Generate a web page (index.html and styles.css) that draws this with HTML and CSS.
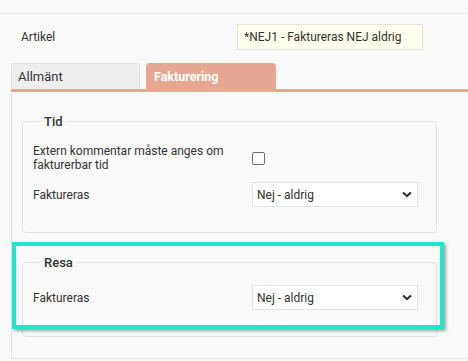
FILE: index.html
```html
<!DOCTYPE html>
<html lang="sv">
<head>
  <meta charset="UTF-8" />
  <title>Artikel</title>
  <link rel="stylesheet" href="styles.css">
</head>
<body>
  <div class="topbar"></div>

  <div class="field-row article-row">
    <label class="field-label">Artikel</label>
    <input type="text" class="article-input" value="*NEJ1 - Faktureras NEJ aldrig" readonly />
  </div>

  <div class="tabs">
    <div class="tab">Allmänt</div>
    <div class="tab active">Fakturering</div>
  </div>

  <div class="panel">
    <fieldset class="group">
      <legend>Tid</legend>
      <div class="field-row check-row">
        <label class="field-label" for="extern">Extern kommentar måste anges om fakturerbar tid</label>
        <input type="checkbox" id="extern" class="check" />
      </div>
      <div class="field-row">
        <label class="field-label">Faktureras</label>
        <div class="select-wrap">
          <select class="select">
            <option>Nej - aldrig</option>
          </select>
          <svg class="chevron" width="10" height="7" viewBox="0 0 10 7"><path d="M1 1.5 L5 5 L9 1.5" fill="none" stroke="#333" stroke-width="2.2"/></svg>
        </div>
      </div>
    </fieldset>

    <fieldset class="group">
      <legend>Resa</legend>
      <div class="field-row">
        <label class="field-label">Faktureras</label>
        <div class="select-wrap">
          <select class="select">
            <option>Nej - aldrig</option>
          </select>
          <svg class="chevron" width="10" height="7" viewBox="0 0 10 7"><path d="M1 1.5 L5 5 L9 1.5" fill="none" stroke="#333" stroke-width="2.2"/></svg>
        </div>
      </div>
    </fieldset>

    <div class="highlight"></div>
  </div>
</body>
</html>
```

FILE: styles.css
```css
* {
  box-sizing: border-box;
}

body {
  margin: 0;
  font-family: Roboto, 'Liberation Sans', sans-serif;
  font-size: 12px;
  color: #333;
  background: #f9f9f9;
  overflow: hidden;
}

.topbar {
  height: 14px;
  border-bottom: 1px solid #e3e3e3;
}

.field-row {
  display: flex;
  align-items: center;
}

.field-label {
  width: 219px;
  line-height: 14px;
}

.article-row {
  margin-top: 10px;
  padding-left: 21px;
}

.article-row .field-label {
  width: 216px;
}

.article-input {
  width: 186px;
  height: 26px;
  padding: 0 6px;
  font-family: inherit;
  font-size: 12px;
  color: #333;
  background: #ffffee;
  border: 1px solid #e2e2e2;
  outline: none;
}

/* tabs */
.tabs {
  display: flex;
  gap: 6px;
  margin: 13px 0 0 11px;
  border-bottom: 3px solid #e8a793;
}

.tab {
  width: 129px;
  height: 26px;
  line-height: 26px;
  padding-left: 6px;
  font-size: 13px;
  background: #efefef;
  border: 1px solid #e2e2e2;
  border-bottom: none;
  border-radius: 4px 4px 0 0;
}

.tab.active {
  width: 130px;
  padding-left: 7px;
  color: #fff;
  font-size: 12.5px;
  font-weight: 700;
  background: #e8a793;
  border-color: #e8a793;
}

/* content panel */
.panel {
  display: flow-root;
  position: relative;
  margin-left: 11px;
  padding: 0 31px 21px 10px;
  border-left: 1px solid #e3e3e3;
  border-bottom: 1px solid #e3e3e3;
}

.group {
  margin: 22px 0 0;
  padding: 15px 10px 25px;
  border: 1px solid #e2e2e2;
  border-radius: 4px;
  min-width: 0;
}

.group + .group {
  padding-bottom: 26px;
}

.group legend {
  margin-left: 8px;
  padding: 0 3px;
  font-size: 13px;
  font-weight: 500;
  line-height: 15px;
}

.check-row {
  height: 28px;
  margin-bottom: 10px;
}

.check-row .field-label {
  width: 205px;
  margin-right: 14px;
}

.check {
  width: 13px;
  height: 13px;
  margin: 0;
  appearance: none;
  border: 1.5px solid #6b6b6b;
  border-radius: 2px;
  background: #fff;
}

.select-wrap {
  position: relative;
}

.select {
  display: block;
  width: 166px;
  height: 25px;
  padding: 0 20px 0 4px;
  font-family: inherit;
  font-size: 12px;
  color: #333;
  background: #fff;
  border: 1px solid #e2e2e2;
  appearance: none;
  outline: none;
}

.chevron {
  position: absolute;
  right: 6px;
  top: 9px;
  pointer-events: none;
}

/* annotation frame */
.highlight {
  position: absolute;
  left: 0;
  top: 150px;
  width: 432px;
  height: 87px;
  border: 4px solid #22e5cb;
  box-shadow: 2px 2px 3px rgba(0, 0, 0, 0.35);
  pointer-events: none;
}
```
